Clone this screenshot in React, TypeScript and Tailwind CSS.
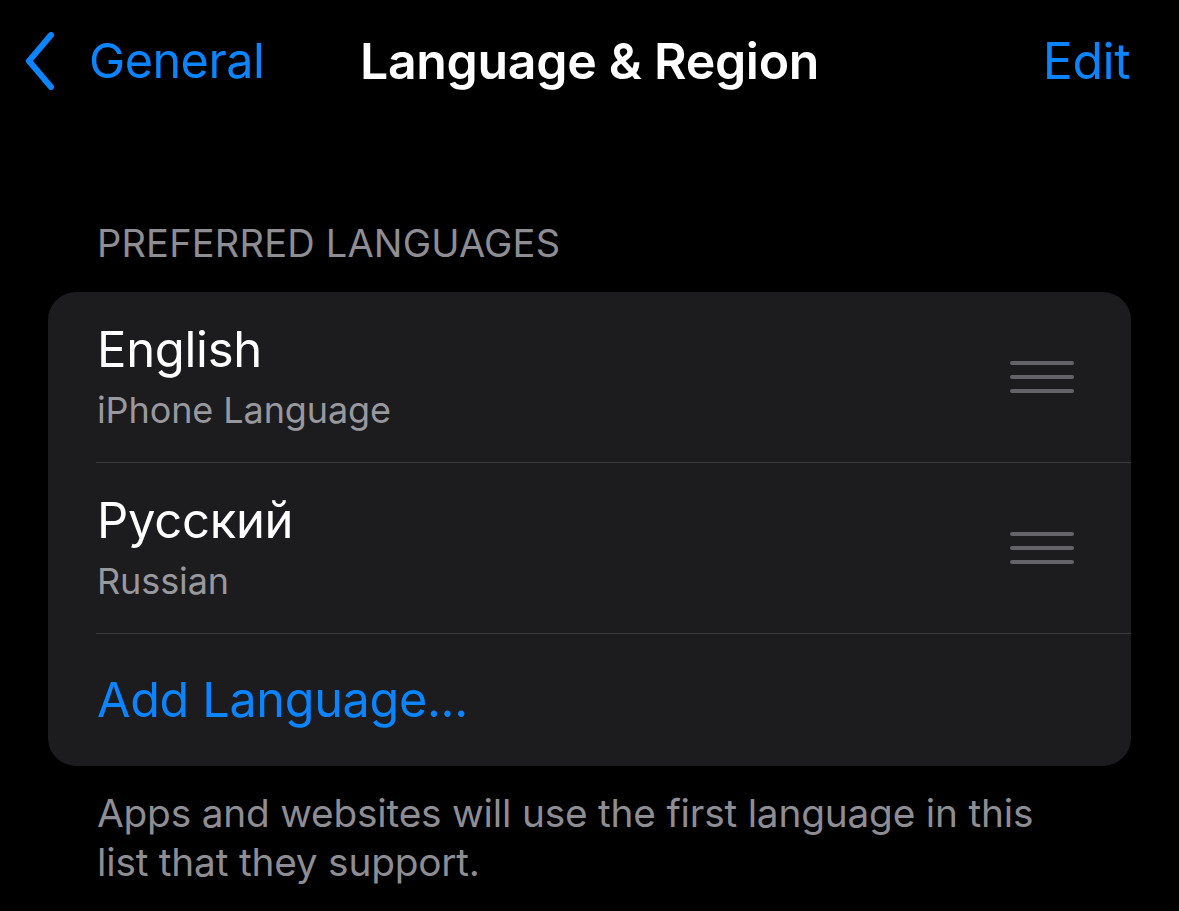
const rows = [
  { name: "English", sub: "iPhone Language" },
  { name: "Русский", sub: "Russian" },
];

const Handle = () => (
  <div className="flex flex-col gap-[10px] w-[64px] mr-[57px]">
    <div className="h-[4px] rounded-full bg-[#636368]" />
    <div className="h-[4px] rounded-full bg-[#636368]" />
    <div className="h-[4px] rounded-full bg-[#636368]" />
  </div>
);

export default function App() {
  return (
    <div
      className="w-[1179px] h-[911px] bg-black overflow-hidden text-white"
      style={{ fontFamily: "Inter, 'Noto Sans', sans-serif" }}
    >
      {/* nav bar */}
      <div className="h-[122px] grid grid-cols-[1fr_auto_1fr] items-center pl-[25px] pr-[49px]">
        <div className="flex items-center text-[#0a84ff]">
          <svg width="30" height="58" viewBox="0 0 30 58" className="mr-[34px]">
            <path
              d="M26 3 L4 29 L26 55"
              fill="none"
              stroke="#0a84ff"
              strokeWidth="6"
              strokeLinecap="round"
              strokeLinejoin="round"
            />
          </svg>
          <span className="text-[48.5px] tracking-[-0.5px]">General</span>
        </div>
        <span className="text-[50px] font-semibold tracking-[-0.3px] pl-[24px]">
          Language &amp; Region
        </span>
        <span className="justify-self-end text-[50px] text-[#0a84ff] tracking-[-0.5px]">Edit</span>
      </div>

      {/* section header */}
      <div className="pl-[97px] pt-[98px] pb-[26px] text-[38px] leading-[46px] text-[#8d8d93] tracking-[0.2px]">
        PREFERRED LANGUAGES
      </div>

      {/* card */}
      <div className="mx-[48px] rounded-[28px] bg-[#1c1c1e] overflow-hidden">
        {rows.map((r) => (
          <div key={r.name} className="pl-[48px]">
            <div className="h-[171px] flex items-center justify-between border-b border-[#3a3a3c]">
              <div className="flex flex-col pl-[1px] pt-[8px]">
                <span className="text-[49px] leading-[58px] tracking-[-0.3px]">{r.name}</span>
                <span className="text-[36px] leading-[62px] text-[#98989f] tracking-[-0.1px]">
                  {r.sub}
                </span>
              </div>
              <Handle />
            </div>
          </div>
        ))}
        <div className="h-[132px] flex items-center pl-[49px]">
          <span className="text-[48.5px] text-[#0a84ff] tracking-[-0.3px]">Add Language...</span>
        </div>
      </div>

      {/* footer */}
      <div className="pl-[97px] pr-[120px] pt-[22px] text-[38.8px] leading-[49px] text-[#8d8d93] tracking-[-0.2px]">
        Apps and websites will use the first language in this list that they support.
      </div>
    </div>
  );
}
